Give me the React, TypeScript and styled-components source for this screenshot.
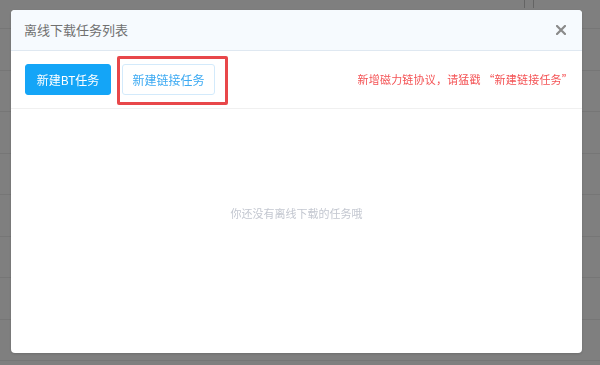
import React from "react";
import styled, { createGlobalStyle } from "styled-components";

const GlobalStyle = createGlobalStyle`
  html, body {
    margin: 0;
    padding: 0;
    width: 600px;
    height: 365px;
    overflow: hidden;
    font-family: "Noto Sans CJK SC", "Noto Sans", sans-serif;
  }
  * { box-sizing: border-box; }
`;

const Page = styled.div`
  width: 600px;
  height: 365px;
  background: #ffffff;
  display: flex;
  flex-direction: column;
`;

const PageTop = styled.div`
  height: 29px;
  flex: none;
  border-bottom: 1px solid #ececec;
  display: flex;
  justify-content: flex-end;
  align-items: flex-start;
  gap: 8px;
  padding-right: 66px;
`;

const Tick = styled.span`
  width: 1px;
  height: 8px;
  background: #c8c8c8;
`;

const PageRow = styled.div<{ $h: number }>`
  height: ${(p) => p.$h}px;
  flex: none;
  border-bottom: 1px solid #ececec;
`;

const Overlay = styled.div`
  position: fixed;
  inset: 0;
  background: rgba(0, 0, 0, 0.5);
`;

const Modal = styled.div`
  position: fixed;
  top: 10px;
  left: 11px;
  width: 571px;
  height: 343px;
  background: #ffffff;
  border-radius: 4px;
  display: flex;
  flex-direction: column;
  overflow: hidden;
  box-shadow: 0 1px 3px rgba(0, 0, 0, 0.15);
`;

const Header = styled.div`
  height: 41px;
  flex: none;
  background: #f6fafe;
  border-bottom: 1px solid #dfe8f1;
  display: flex;
  align-items: center;
  justify-content: space-between;
  padding: 0 16px 0 13px;
`;

const Title = styled.div`
  font-size: 13px;
  color: #707070;
  line-height: 16px;
`;

const Close = styled.button`
  width: 10px;
  height: 10px;
  border: 0;
  padding: 0;
  background: transparent;
  display: flex;
  cursor: pointer;
`;

const Toolbar = styled.div`
  height: 58px;
  flex: none;
  border-bottom: 1px solid #f0f0f0;
  display: flex;
  align-items: center;
  padding: 0 9px 1px 14px;
  gap: 11px;
`;

const Button = styled.button<{ $primary?: boolean; $w: number }>`
  position: relative;
  width: ${(p) => p.$w}px;
  height: 31px;
  border-radius: 3px;
  font-family: inherit;
  font-size: 12px;
  padding: 0;
  cursor: pointer;
  background: ${(p) => (p.$primary ? "#14a5f7" : "#ffffff")};
  color: ${(p) => (p.$primary ? "#ffffff" : "#3ba9f2")};
  border: 1px solid ${(p) => (p.$primary ? "#14a5f7" : "#d3eafb")};
`;

const Highlight = styled.span`
  position: absolute;
  left: -6px;
  top: -9px;
  width: 111px;
  height: 49px;
  border: 3px solid #e8474a;
  border-radius: 2px;
  pointer-events: none;
`;

const Notice = styled.div`
  margin-left: auto;
  font-size: 11px;
  letter-spacing: 0.2px;
  color: #f45456;
  white-space: pre;
`;

const Body = styled.div`
  flex: 1;
  display: flex;
  justify-content: center;
  padding-top: 96px;
`;

const Empty = styled.div`
  font-size: 11px;
  line-height: 16px;
  height: 16px;
  color: #c3c7d0;
`;

const rows = [42, 41, 42, 41, 42, 41, 42, 41];

export default function App() {
  return (
    <>
      <GlobalStyle />
      <Page>
        <PageTop>
          <Tick />
          <Tick />
        </PageTop>
        {rows.map((h, i) => (
          <PageRow key={i} $h={h} />
        ))}
      </Page>
      <Overlay />
      <Modal>
        <Header>
          <Title>离线下载任务列表</Title>
          <Close aria-label="close">
            <svg width="10" height="10" viewBox="0 0 10 10">
              <path d="M1 1 L9 9 M9 1 L1 9" stroke="#8a8a8a" strokeWidth="2.2" strokeLinecap="square" />
            </svg>
          </Close>
        </Header>
        <Toolbar>
          <Button $primary $w={86}>新建BT任务</Button>
          <Button $w={93}>
            新建链接任务
            <Highlight />
          </Button>
          <Notice>新增磁力链协议，请猛戳 “新建链接任务”</Notice>
        </Toolbar>
        <Body>
          <Empty>你还没有离线下载的任务哦</Empty>
        </Body>
      </Modal>
    </>
  );
}
